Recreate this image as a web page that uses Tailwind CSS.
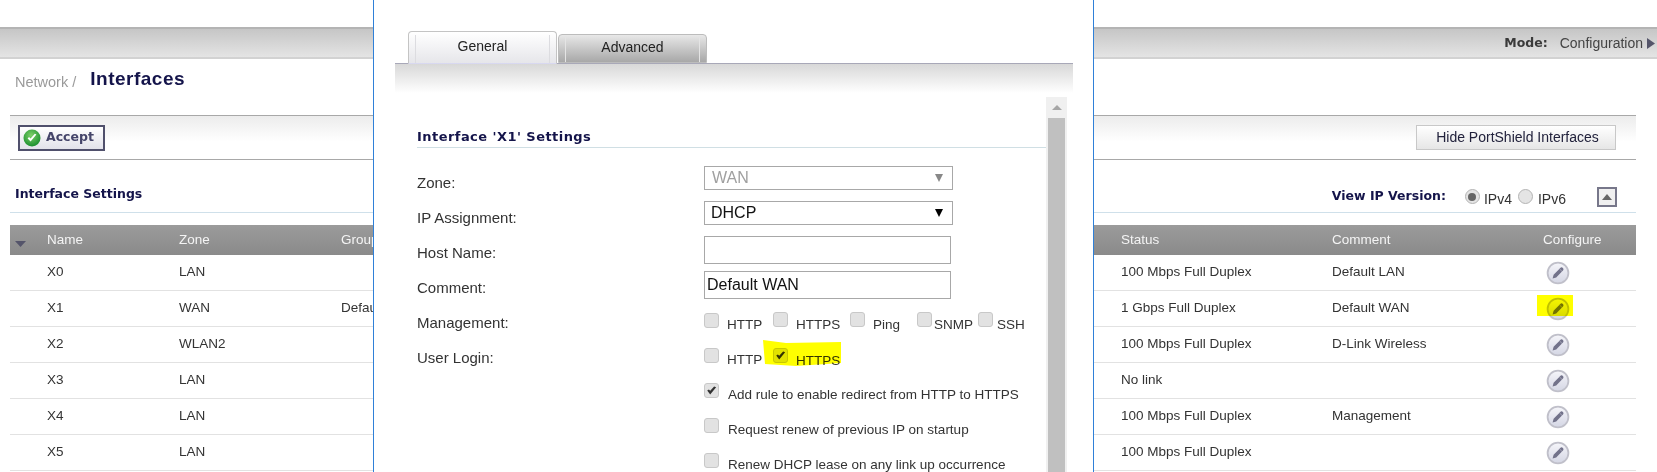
<!DOCTYPE html>
<html>
<head>
<meta charset="utf-8">
<script src="https://cdn.jsdelivr.net/npm/@tailwindcss/browser@4"></script>
<title>Interfaces</title>
</head>
<body class="bg-white">
<svg width="0" height="0" class="absolute">
  <defs>
    <linearGradient id="pg" x1="0" y1="0" x2="0" y2="1"><stop offset="0" stop-color="#f6f6fa"/><stop offset="1" stop-color="#d4d6e4"/></linearGradient>
    <symbol id="pencil" viewBox="0 0 24 24">
      <circle cx="12" cy="12" r="10.4" fill="url(#pg)" stroke="#c0c0ca" stroke-width="1.8"/>
      <path d="M6.6 17.6 L7.6 13.8 L14.8 6.6 Q15.8 5.9 16.9 7 Q18 8.1 17.2 9.2 L10.2 16.4 Z" fill="#72728a"/>
      <path d="M13.6 8 L16 10.4" stroke="#b4b4c4" stroke-width="0.8"/>
    </symbol>
    <symbol id="check" viewBox="0 0 14 14">
      <path d="M2.4 7 L5.6 11.4 L12 3.4 L9.8 2.6 L5.6 7.4 L4.2 5.8 Z" fill="#333"/>
    </symbol>
  </defs>
</svg>

<div class="relative w-[1657px] h-[472px] overflow-hidden bg-white font-['Liberation_Sans',sans-serif] text-[13.5px] text-[#333]">

  <!-- top bar -->
  <div class="h-[27px]"></div>
  <div class="h-[32px] border-t-2 border-b-2 border-t-[#b4b4b4] border-b-[#d2d2d2] bg-linear-to-b from-[#c6c6c6] to-[#e4e4e4] flex items-center justify-end pr-[2px]">
    <span class="font-['DejaVu_Sans',sans-serif] font-bold text-[12.5px] text-[#3a3a3a] mr-[12px]">Mode:</span>
    <span class="text-[14px] text-[#444]">Configuration</span>
    <svg class="ml-[4px] w-[8px] h-[11px]" viewBox="0 0 8 11"><path d="M0 0 L8 5.5 L0 11 Z" fill="#55556a"/></svg>
  </div>

  <!-- breadcrumb -->
  <div class="h-[56px] pl-[15px] pt-[11px] flex items-start">
    <span class="text-[14.5px] text-[#9a9a9a] mt-[2px]">Network /</span>
    <span class="ml-[14px] font-bold text-[19px] tracking-[0.5px] text-[#14144a] leading-[20px] mt-[-1px]">Interfaces</span>
  </div>

  <div class="ml-[10px] w-[1626px]">
    <!-- toolbar -->
    <div class="h-[45px] border-y border-[#a8a8a8] bg-linear-to-b from-[#ececec] via-white via-60% to-white flex items-center justify-between pl-[8px] pr-[20px]">
      <button class="h-[26px] w-[87px] border-2 border-[#50506c] bg-linear-to-b from-white to-[#e2e2ea] flex items-center pl-[3px] gap-[5px]">
        <svg class="w-[18px] h-[18px]" viewBox="0 0 18 18">
          <defs><radialGradient id="gr" cx="0.45" cy="0.35" r="0.7"><stop offset="0" stop-color="#7fd06a"/><stop offset="1" stop-color="#128a2a"/></radialGradient></defs>
          <circle cx="9" cy="9" r="8.5" fill="url(#gr)"/>
          <path d="M4.6 9.4 L7.6 12.6 L13.4 5.6 L11.8 4.8 L7.6 9.6 L6 8 Z" fill="#fff"/>
        </svg>
        <span class="font-['DejaVu_Sans',sans-serif] font-bold text-[12.5px] text-[#45456a]">Accept</span>
      </button>
      <button class="h-[25px] w-[200px] border border-[#c8c8c8] bg-linear-to-b from-white to-[#e6e6e6] text-[14px] text-[#22223c] text-center pl-[3px]">Hide PortShield Interfaces</button>
    </div>

    <!-- section title -->
    <div class="h-[53px] border-b border-[#cfe0ea] flex items-center pl-[5px] pr-[19px] pt-[21px]">
      <span class="mb-[4px] font-['DejaVu_Sans',sans-serif] font-bold text-[12.5px] text-[#14144a]">Interface Settings</span>
      <span class="ml-auto font-['DejaVu_Sans',sans-serif] font-bold text-[12.5px] text-[#14144a]">View IP Version:</span>
      <span class="ml-[19px] w-[15px] h-[15px] rounded-full border border-[#b4b4b4] bg-[#e4e4e4] flex items-center justify-center"><span class="w-[8px] h-[8px] rounded-full bg-[#666]"></span></span>
      <span class="ml-[4px] mt-[6px] text-[14px] text-[#333]">IPv4</span>
      <span class="ml-[6px] w-[15px] h-[15px] rounded-full border border-[#b4b4b4] bg-[#e4e4e4]"></span>
      <span class="ml-[5px] mt-[6px] text-[14px] text-[#333]">IPv6</span>
      <span class="ml-[31px] w-[20px] h-[20px] border-2 border-[#77778a] bg-[#f0f0f0] flex items-center justify-center">
        <svg class="w-[10px] h-[6px]" viewBox="0 0 10 6"><path d="M5 0 L10 6 L0 6 Z" fill="#666"/></svg>
      </span>
    </div>

    <!-- table -->
    <div class="mt-[12px]">
      <div class="h-[30px] grid grid-cols-[37px_132px_162px_780px_211px_211px_93px] bg-linear-to-b from-[#9b9b9b] to-[#8a8a8a] text-[#f4f4f4] items-center">
        <div class="pl-[5px] pt-[8px]"><svg class="w-[11px] h-[6px]" viewBox="0 0 11 6"><path d="M0 0 L11 0 L5.5 6 Z" fill="#54546a"/></svg></div>
        <div>Name</div><div>Zone</div><div>Group</div><div>Status</div><div>Comment</div><div>Configure</div>
      </div>

      <div class="h-[36px] border-b border-[#e2e2e2] grid grid-cols-[37px_132px_162px_780px_211px_211px_93px] items-center">
        <div></div><div>X0</div><div>LAN</div><div></div><div>100 Mbps Full Duplex</div><div>Default LAN</div>
        <div class="pl-[3px] h-[24px]"><svg class="w-[24px] h-[24px]"><use href="#pencil"/></svg></div>
      </div>
      <div class="h-[36px] border-b border-[#e2e2e2] grid grid-cols-[37px_132px_162px_780px_211px_211px_93px] items-center">
        <div></div><div>X1</div><div>WAN</div><div>Default</div><div>1 Gbps Full Duplex</div><div>Default WAN</div>
        <div class="pl-[3px] h-[24px] relative">
          <svg class="w-[24px] h-[24px]"><use href="#pencil"/></svg>
          <span class="absolute left-[-6px] top-[-2px] w-[36px] h-[21px] bg-[#ffff00] mix-blend-multiply"></span>
        </div>
      </div>
      <div class="h-[36px] border-b border-[#e2e2e2] grid grid-cols-[37px_132px_162px_780px_211px_211px_93px] items-center">
        <div></div><div>X2</div><div>WLAN2</div><div></div><div>100 Mbps Full Duplex</div><div>D-Link Wireless</div>
        <div class="pl-[3px] h-[24px]"><svg class="w-[24px] h-[24px]"><use href="#pencil"/></svg></div>
      </div>
      <div class="h-[36px] border-b border-[#e2e2e2] grid grid-cols-[37px_132px_162px_780px_211px_211px_93px] items-center">
        <div></div><div>X3</div><div>LAN</div><div></div><div>No link</div><div></div>
        <div class="pl-[3px] h-[24px]"><svg class="w-[24px] h-[24px]"><use href="#pencil"/></svg></div>
      </div>
      <div class="h-[36px] border-b border-[#e2e2e2] grid grid-cols-[37px_132px_162px_780px_211px_211px_93px] items-center">
        <div></div><div>X4</div><div>LAN</div><div></div><div>100 Mbps Full Duplex</div><div>Management</div>
        <div class="pl-[3px] h-[24px]"><svg class="w-[24px] h-[24px]"><use href="#pencil"/></svg></div>
      </div>
      <div class="h-[36px] border-b border-[#e2e2e2] grid grid-cols-[37px_132px_162px_780px_211px_211px_93px] items-center">
        <div></div><div>X5</div><div>LAN</div><div></div><div>100 Mbps Full Duplex</div><div></div>
        <div class="pl-[3px] h-[24px]"><svg class="w-[24px] h-[24px]"><use href="#pencil"/></svg></div>
      </div>
    </div>
  </div>

  <!-- modal dialog over the page -->
  <div class="absolute left-[373px] top-0 w-[721px] h-[472px] bg-white border-x border-[#2f80d8] overflow-hidden">
    <!-- tabs -->
    <div class="h-[63px] ml-[34px] flex items-end gap-[1px] text-[14px] text-[#222]">
      <div class="relative w-[149px] h-[33px] rounded-t-[4px] border border-[#c4c4c4] border-b-[#d8d8f0] bg-linear-to-b from-white to-[#e6e6ea] flex items-center justify-center pb-[2px] z-10 mb-[-1px]">
        General
        <span class="absolute left-[6px] top-[3px] bottom-0 w-px bg-[#dcdce0]"></span>
        <span class="absolute right-[6px] top-[3px] bottom-0 w-px bg-[#dcdce0]"></span>
      </div>
      <div class="relative w-[149px] h-[29px] rounded-t-[4px] border border-[#bcbcbc] bg-linear-to-b from-[#e8e8e8] to-[#a8a8a8] flex items-center justify-center pb-[3px]">
        Advanced
        <span class="absolute left-[6px] top-[1px] bottom-0 w-px bg-[#e4e4e4]"></span>
        <span class="absolute right-[6px] top-[1px] bottom-0 w-px bg-[#e4e4e4]"></span>
      </div>
    </div>
    <div class="h-[30px] ml-[21px] w-[678px] border-t border-[#a8a8b8] bg-linear-to-b from-[#d8d8d8] to-white"></div>

    <div class="flex ml-[43px] mt-[4px] h-[375px] w-[650px]">
      <div class="w-[629px]">
        <div class="h-[51px] border-b border-[#d0dfe4] flex items-end pb-[1px] font-['DejaVu_Sans',sans-serif] font-bold text-[13px] tracking-[0.45px] text-[#14144a]">Interface 'X1' Settings</div>
        <div class="h-[18px]"></div>

        <div class="flex h-[35px]">
          <div class="w-[287px] flex items-center text-[15px]">Zone:</div>
          <div class="w-[249px] h-[24px] border border-[#a8a8a8] flex items-center justify-between pl-[7px] pr-[9px] text-[16px] text-[#a0a0a0]">WAN<svg class="w-[8px] h-[8px]" viewBox="0 0 8 8"><path d="M0 0 L8 0 L4 8 Z" fill="#888"/></svg></div>
        </div>
        <div class="flex h-[35px]">
          <div class="w-[287px] flex items-center text-[15px]">IP Assignment:</div>
          <div class="w-[249px] h-[24px] border border-[#a8a8a8] flex items-center justify-between pl-[6px] pr-[9px] text-[16px] text-[#111]">DHCP<svg class="w-[8px] h-[8px]" viewBox="0 0 8 8"><path d="M0 0 L8 0 L4 8 Z" fill="#000"/></svg></div>
        </div>
        <div class="flex h-[35px]">
          <div class="w-[287px] flex items-center text-[15px]">Host Name:</div>
          <input class="w-[247px] h-[28px] border border-[#a8a8a8] px-[2px] text-[16px]" value="">
        </div>
        <div class="flex h-[35px]">
          <div class="w-[287px] flex items-center text-[15px]">Comment:</div>
          <input class="w-[247px] h-[28px] border border-[#a8a8a8] px-[2px] text-[16px] text-[#111]" value="Default WAN">
        </div>

        <div class="flex h-[35px]">
          <div class="w-[287px] flex items-center text-[15px]">Management:</div>
          <div class="relative flex-1">
            <span class="absolute left-0 top-[7px] w-[15px] h-[15px] rounded-[3px] border border-[#c8c8c8] bg-[#e2e2e2]"></span>
            <span class="absolute left-[23px] top-[9px]">HTTP</span>
            <span class="absolute left-[69px] top-[6px] w-[15px] h-[15px] rounded-[3px] border border-[#c8c8c8] bg-[#e2e2e2]"></span>
            <span class="absolute left-[92px] top-[9px]">HTTPS</span>
            <span class="absolute left-[146px] top-[6px] w-[15px] h-[15px] rounded-[3px] border border-[#c8c8c8] bg-[#e2e2e2]"></span>
            <span class="absolute left-[169px] top-[9px]">Ping</span>
            <span class="absolute left-[213px] top-[6px] w-[15px] h-[15px] rounded-[3px] border border-[#c8c8c8] bg-[#e2e2e2]"></span>
            <span class="absolute left-[230px] top-[9px]">SNMP</span>
            <span class="absolute left-[274px] top-[6px] w-[15px] h-[15px] rounded-[3px] border border-[#c8c8c8] bg-[#e2e2e2]"></span>
            <span class="absolute left-[293px] top-[9px]">SSH</span>
          </div>
        </div>
        <div class="flex h-[35px]">
          <div class="w-[287px] flex items-center text-[15px]">User Login:</div>
          <div class="relative flex-1">
            <span class="absolute left-0 top-[7px] w-[15px] h-[15px] rounded-[3px] border border-[#c8c8c8] bg-[#e2e2e2]"></span>
            <span class="absolute left-[23px] top-[9px]">HTTP</span>
            <span class="absolute left-[69px] top-[7px] w-[15px] h-[15px] rounded-[3px] border border-[#c8c8c8] bg-[#e2e2e2]"><svg class="w-[13px] h-[13px]"><use href="#check"/></svg></span>
            <span class="absolute left-[92px] top-[10px]">HTTPS</span>
            <svg class="absolute left-[58px] top-[-1px] w-[80px] h-[27px] mix-blend-multiply" viewBox="0 0 80 27"><path d="M1 0 L24 3 L79 2 L79 23 L34 26 L3 24 Z" fill="#ffff00"/></svg>
          </div>
        </div>
        <div class="flex h-[35px] pl-[287px] relative">
          <span class="absolute left-[287px] top-[7px] w-[15px] h-[15px] rounded-[3px] border border-[#c8c8c8] bg-[#e2e2e2]"><svg class="w-[13px] h-[13px]"><use href="#check"/></svg></span>
          <span class="ml-[24px] mt-[9px]">Add rule to enable redirect from HTTP to HTTPS</span>
        </div>
        <div class="flex h-[35px] pl-[287px] relative">
          <span class="absolute left-[287px] top-[7px] w-[15px] h-[15px] rounded-[3px] border border-[#c8c8c8] bg-[#e2e2e2]"></span>
          <span class="ml-[24px] mt-[9px]">Request renew of previous IP on startup</span>
        </div>
        <div class="flex h-[35px] pl-[287px] relative">
          <span class="absolute left-[287px] top-[7px] w-[15px] h-[15px] rounded-[3px] border border-[#c8c8c8] bg-[#e2e2e2]"></span>
          <span class="ml-[24px] mt-[9px]">Renew DHCP lease on any link up occurrence</span>
        </div>
      </div>
      <!-- scrollbar -->
      <div class="w-[21px] bg-[#f0f0f0] flex flex-col items-center">
        <div class="h-[21px] flex items-center justify-center"><svg class="w-[10px] h-[5px]" viewBox="0 0 10 5"><path d="M5 0 L10 5 L0 5 Z" fill="#a6a6a6"/></svg></div>
        <div class="w-[17px] flex-1 bg-[#c0c0c0]"></div>
      </div>
    </div>
  </div>
</div>
</body>
</html>
